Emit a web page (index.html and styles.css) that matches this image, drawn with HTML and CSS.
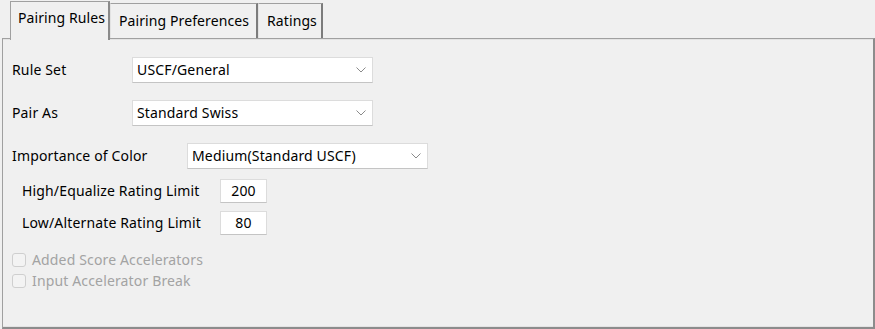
FILE: index.html
```html
<!DOCTYPE html>
<html>
<head>
<meta charset="utf-8">
<link rel="stylesheet" href="styles.css">
</head>
<body>
<div class="window">
  <div class="tabs">
    <div class="tab active">Pairing Rules</div>
    <div class="tab prefs">Pairing Preferences</div>
    <div class="tab ratings">Ratings</div>
  </div>
  <div class="panel">
    <div class="row row-first">
      <span class="label w-rule">Rule Set</span>
      <div class="select">
        <span class="select-text">USCF/General</span>
        <svg class="chev" width="10" height="6" viewBox="0 0 10 6"><path d="M0.5 0.5 L5 5 L9.5 0.5" fill="none" stroke="#8a8a8a" stroke-width="1"/></svg>
      </div>
    </div>
    <div class="row row-gap">
      <span class="label w-rule">Pair As</span>
      <div class="select">
        <span class="select-text">Standard Swiss</span>
        <svg class="chev" width="10" height="6" viewBox="0 0 10 6"><path d="M0.5 0.5 L5 5 L9.5 0.5" fill="none" stroke="#8a8a8a" stroke-width="1"/></svg>
      </div>
    </div>
    <div class="row row-gap">
      <span class="label w-color">Importance of Color</span>
      <div class="select">
        <span class="select-text">Medium(Standard USCF)</span>
        <svg class="chev" width="10" height="6" viewBox="0 0 10 6"><path d="M0.5 0.5 L5 5 L9.5 0.5" fill="none" stroke="#8a8a8a" stroke-width="1"/></svg>
      </div>
    </div>
    <div class="row row-sub row-sub-first">
      <span class="label w-limit">High/Equalize Rating Limit</span>
      <div class="num">200</div>
    </div>
    <div class="row row-sub row-sub-next">
      <span class="label w-limit">Low/Alternate Rating Limit</span>
      <div class="num">80</div>
    </div>
    <div class="checks">
      <label class="check"><span class="box"></span><span class="check-text">Added Score Accelerators</span></label>
      <label class="check"><span class="box"></span><span class="check-text">Input Accelerator Break</span></label>
    </div>
  </div>
</div>
</body>
</html>
```
FILE: styles.css
```css
html, body {
  margin: 0;
  padding: 0;
  background: #f0f0f0;
}
body {
  font-family: "Noto Sans", "DejaVu Sans", sans-serif;
  font-size: 14px;
  letter-spacing: 0.15px;
  color: #000;
  width: 875px;
  height: 329px;
  overflow: hidden;
}
.window {
  display: flex;
  flex-direction: column;
  height: 329px;
}
.tabs {
  display: flex;
  align-items: flex-end;
  height: 38px;
  padding-left: 10px;
  flex: none;
  letter-spacing: 0.1px;
}
.tab {
  box-sizing: border-box;
  background: #f0f0f0;
  line-height: 18px;
  white-space: nowrap;
  border-top: 1px solid #a0a0a0;
  border-left: 1px solid #e3e3e3;
  border-right: 2px solid #7c7c7c;
  height: 35px;
  padding-top: 8px;
  padding-left: 8px;
}
.tab.active {
  position: relative;
  z-index: 1;
  height: 39px;
  margin-bottom: -2px;
  width: 100px;
  padding-top: 7px;
  padding-left: 7px;
  border-left: 1px solid #a0a0a0;
  border-right: 2px solid #8a8a8a;
}
.tab.prefs {
  width: 148px;
}
.tab.ratings {
  width: 65px;
}
.panel {
  flex: 1;
  margin-left: 2px;
  box-sizing: border-box;
  border-top: 1px solid #a0a0a0;
  border-left: 1px solid #a0a0a0;
  border-right: 2px solid #8c8c8c;
  border-bottom: 2px solid #8c8c8c;
  box-shadow: inset 0 1px 0 #e3e3e3, inset 0 -1px 0 #e3e3e3;
  padding: 18px 0 0 9px;
}
.row {
  display: flex;
  align-items: center;
}
.row-gap {
  margin-top: 17px;
}
.label {
  flex: none;
  line-height: 18px;
}
.w-rule { width: 120px; }
.w-color { width: 175px; }
.w-limit { width: 198px; }
.select {
  box-sizing: border-box;
  width: 241px;
  height: 26px;
  background: #fff;
  border: 1px solid #dcdcdc;
  border-bottom-color: #c4c4c4;
  display: flex;
  align-items: center;
  justify-content: space-between;
  padding: 0 6px 0 4px;
}
.select-text {
  line-height: 18px;
}
.chev {
  display: block;
}
.row-sub {
  padding-left: 10px;
}
.row-sub-first {
  margin-top: 10px;
}
.row-sub-next {
  margin-top: 8px;
}
.num {
  box-sizing: border-box;
  width: 47px;
  height: 24px;
  background: #fff;
  border: 1px solid #dcdcdc;
  border-bottom-color: #c4c4c4;
  text-align: center;
  line-height: 22px;
}
.checks {
  margin-top: 14px;
  display: flex;
  flex-direction: column;
}
.check {
  display: flex;
  align-items: center;
  height: 21px;
  color: #a3a3a3;
}
.box {
  box-sizing: border-box;
  width: 14px;
  height: 14px;
  border: 1px solid #cfcfcf;
  border-radius: 3px;
  background: #f3f3f3;
  margin-right: 6px;
  flex: none;
}
.check-text {
  line-height: 18px;
}
```
